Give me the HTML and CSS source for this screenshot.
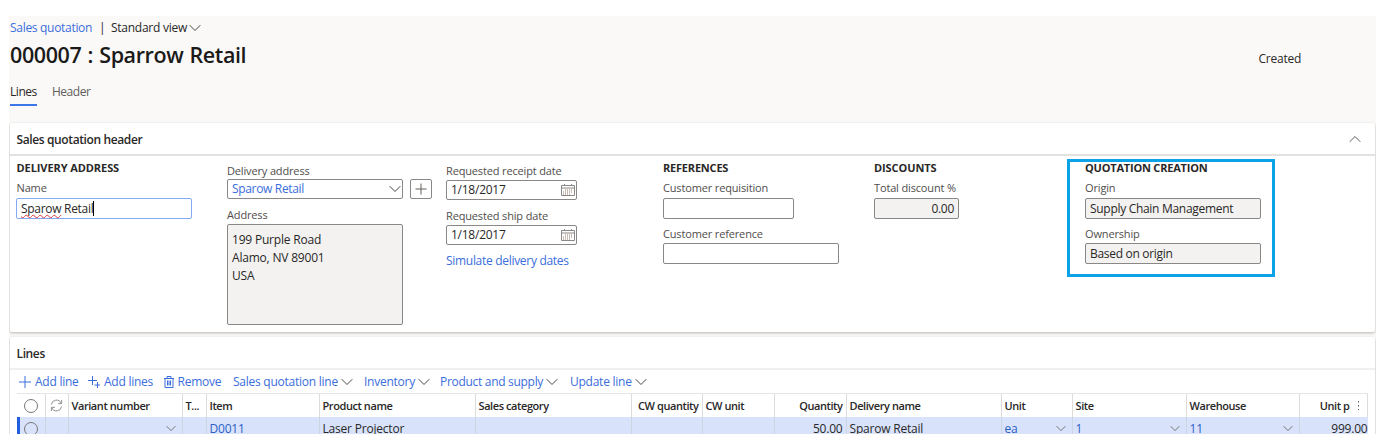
FILE: index.html
```html
<!DOCTYPE html>
<html lang="en">
<head>
<meta charset="utf-8">
<title>Sales quotation</title>
<link rel="stylesheet" href="styles.css">
</head>
<body>
<svg class="defs" width="0" height="0">
  <symbol id="chev" viewBox="0 0 12 8"><path d="M.7 1.200 6 6.500 11.300 1.200" fill="none" stroke="currentColor"/></symbol>
  <symbol id="cal" viewBox="0 0 14 14"><path d="M.5 2.500h13v10H.5zM.5 5h13M3.500 1v2M10.500 1v2" fill="none" stroke="#8a8886"/><path d="M4 7h8M2 9h10M2 11h7" fill="none" stroke="#98796c" stroke-dasharray="1 1"/></symbol>
</svg>
<main class="page">
  <header class="head">
    <div class="crumb"><a class="link">Sales quotation</a><span class="bar">|</span><span class="view">Standard view</span><svg class="chev"><use href="#chev"/></svg></div>
    <div class="title-row"><h1>000007 : Sparrow Retail</h1><span class="status">Created</span></div>
    <nav class="tabs"><span class="tab active">Lines</span><span class="tab">Header</span></nav>
  </header>

  <section class="card details">
    <div class="card-head"><h2>Sales quotation header</h2><svg class="chev up"><use href="#chev"/></svg></div>
    <div class="groups">
      <div class="group">
        <h3 class="wide">DELIVERY ADDRESS</h3>
        <label>Name</label>
        <div class="input focus"><span class="typo">Sparow</span>&nbsp;Retail<i class="caret"></i></div>
      </div>
      <div class="group raised">
        <label>Delivery address</label>
        <div class="combo"><div class="input link">Sparow Retail<svg class="chev"><use href="#chev"/></svg></div><span class="add"><svg viewBox="0 0 12 12"><path d="M6 .5v11M.5 6h11"/></svg></span></div>
        <label class="addr-label">Address</label>
        <div class="area">199 Purple Road<br>Alamo, NV 89001<br>USA</div>
      </div>
      <div class="group raised dates">
        <label>Requested receipt date</label>
        <div class="input date">1/18/2017<svg class="cal"><use href="#cal"/></svg></div>
        <label>Requested ship date</label>
        <div class="input date">1/18/2017<svg class="cal"><use href="#cal"/></svg></div>
        <a class="link simulate">Simulate delivery dates</a>
      </div>
      <div class="group">
        <h3>REFERENCES</h3>
        <label>Customer requisition</label>
        <div class="input medium"></div>
        <label class="next">Customer reference</label>
        <div class="input"></div>
      </div>
      <div class="group">
        <h3 class="wide">DISCOUNTS</h3>
        <label>Total discount %</label>
        <div class="input small ro">0.00</div>
      </div>
      <div class="group marked">
        <h3>QUOTATION CREATION</h3>
        <label>Origin</label>
        <div class="input ro">Supply Chain Management</div>
        <label class="next">Ownership</label>
        <div class="input ro">Based on origin</div>
      </div>
    </div>
  </section>

  <section class="card lines">
    <div class="card-head"><h2>Lines</h2></div>
    <div class="toolbar">
      <span class="tool w1"><svg viewBox="0 0 12 12"><path d="M6 0v12M0 6h12"/></svg>Add line</span>
      <span class="tool w2"><svg viewBox="0 0 12 12"><path d="M4.500 0v9M0 4.500h9M9.500 6v6M6.500 9h5.500"/></svg>Add lines</span>
      <span class="tool w3"><svg viewBox="0 0 12 12"><path d="M1 2.500h10M4 2.500V.5h4v2M2 2.500v9h8v-9M4.500 4.500v5M6 4.500v5M7.500 4.500v5"/></svg>Remove</span>
      <span class="tool w4">Sales quotation line<svg class="chev"><use href="#chev"/></svg></span>
      <span class="tool w5">Inventory<svg class="chev"><use href="#chev"/></svg></span>
      <span class="tool w6">Product and supply<svg class="chev"><use href="#chev"/></svg></span>
      <span class="tool w7">Update line<svg class="chev"><use href="#chev"/></svg></span>
    </div>
    <div class="grid">
      <div class="row hd">
        <span class="mark"><i class="radio"></i></span>
        <span class="mark"><svg class="refresh" viewBox="0 0 14 14"><path d="M1.500 6A5.500 5.500 0 0 1 12 4.500M12.500 1v4H8.700M12.500 8A5.500 5.500 0 0 1 2 9.500M1.500 13V9h3.800"/></svg></span>
        <span>Variant number</span><span>T...</span><span>Item</span><span>Product name</span><span>Sales category</span><span class="num">CW quantity</span><span>CW unit</span><span class="num">Quantity</span><span>Delivery name</span><span>Unit</span><span>Site</span><span>Warehouse</span><span class="price">Unit p<svg class="dots" viewBox="0 0 3 11"><path d="M1.500 1v9"/></svg></span>
      </div>
      <div class="row sel">
        <span class="mark"><i class="radio"></i></span><span></span>
        <span><svg class="chev"><use href="#chev"/></svg></span><span></span><span class="ref">D0011</span><span>Laser Projector</span><span></span><span></span><span></span><span class="num">50.00</span><span>Sparow Retail</span>
        <span class="ref">ea<svg class="chev"><use href="#chev"/></svg></span><span class="ref">1<svg class="chev"><use href="#chev"/></svg></span><span class="ref">11<svg class="chev"><use href="#chev"/></svg></span><span class="num last">999.00</span>
      </div>
    </div>
  </section>
</main>
</body>
</html>
```
FILE: styles.css
```css
*, *::before { box-sizing: border-box; }
body { margin: 0; padding: 16px 0 0 9px; background: #fff; color: #292827; font: 12px/18px "Open Sans", "Noto Sans", sans-serif; letter-spacing: -0.3px; white-space: nowrap; }
h1, h2, h3 { margin: 0; }
.defs { display: block; }
.page { width: 1367px; height: 417.500px; overflow: hidden; background: #faf9f8; }
.link { color: #3a6edc; }
.chev { width: 12px; height: 8px; flex: none; color: #484644; }

.head { height: 107px; padding: 3px 0 0 1px; }
.crumb { display: flex; align-items: center; height: 18px; }
.bar { margin: 0 5.500px 0 7px; }
.view { letter-spacing: -0.25px; }
.crumb .chev { margin-left: 2px; }
.title-row { display: flex; height: 28px; margin-top: 4px; align-items: center; justify-content: space-between; }
h1 { font-size: 21.500px; line-height: 28px; font-weight: 600; letter-spacing: -0.4px; word-spacing: 1px; color: #1b1a19; }
.status { margin: 7px 75px 0 0; letter-spacing: -0.25px; }
.tabs { display: flex; gap: 15px; margin-top: 14px; }
.tab { height: 23px; color: #605e5c; letter-spacing: -0.45px; }
.tab.active { color: #292827; border-bottom: 2px solid #3c76e8; }

.card { width: 1365px; margin-left: 0.5px; background: #fff; border-radius: 2px; box-shadow: 0 1px 3px rgba(0,0,0,.28); }
.details { height: 209px; }
.card-head { display: flex; align-items: center; justify-content: space-between; height: 33px; padding: 2px 14px 0 7px; border-bottom: 2px solid #e3e2e1; }
h2 { font-size: 12px; font-weight: 600; letter-spacing: -0.38px; }
.up { margin-top: -1px; transform: rotate(180deg); color: #605e5c; }
.groups { display: grid; grid-template-columns: 210.5px 219px 217px 211px 211px 189px; padding: 3px 0 0 7px; }
.group { padding-top: 1px; }
.raised { padding-top: 3px; }
h3 { height: 20px; font-size: 11px; line-height: 15px; font-weight: 700; letter-spacing: -0.2px; }
.wide { letter-spacing: -0.08px; }
label { display: block; height: 18px; font-size: 11px; line-height: 16px; font-weight: 500; color: #504e4c; letter-spacing: -0.15px; }
.input { display: flex; align-items: center; width: 176px; height: 21px; padding: 0 4px; border: 1px solid #8a8886; border-radius: 2px; background: #fff; letter-spacing: -0.3px; }
.focus { margin-left: -0.5px; border-color: #84a9f5; }
.ro { background: #f3f2f1; }
.medium { width: 131px; }
.small { width: 85px; justify-content: flex-end; }
.next { margin-top: 6px; line-height: 17px; }
.typo { text-decoration: underline wavy #e03a3a 1px; text-underline-offset: 1px; text-decoration-skip-ink: none; }
.caret { width: 1px; height: 15px; background: #000; }
.combo { display: flex; gap: 7px; }
.combo .input, .combo .add { height: 20px; }
.raised label { height: 17px; line-height: 17px; }
.combo .input { justify-content: space-between; padding-right: 1px; letter-spacing: -0.33px; }
.combo .input .chev { color: #484644; }
.add { display: flex; width: 22px; align-items: center; justify-content: center; border: 1px solid #8a8886; border-radius: 2px; }
.add svg { width: 12px; height: 12px; stroke: #605e5c; }
.raised .addr-label { margin-top: 7px; height: 18px; }
.area { width: 176px; height: 101px; padding: 6px 4px; border: 1px solid #8a8886; border-radius: 2px; background: #f3f2f1; letter-spacing: -0.2px; }
.raised .date { width: 131px; height: 20px; justify-content: space-between; padding-right: 1px; letter-spacing: -0.25px; }
.cal { width: 14px; height: 14px; }
.dates .date { margin-bottom: 7px; }
.dates label { height: 18px; }
.simulate { display: block; letter-spacing: -0.3px; }
.marked { position: relative; }
.marked::before { content: ""; position: absolute; left: -18px; top: 0; width: 208px; height: 118px; border: 3px solid #0ba3e8; }

.lines { height: 120px; margin-top: 5px; }
.lines .card-head { border-bottom-color: #f1f0ef; }
.toolbar { display: flex; height: 23px; padding-left: 9.500px; align-items: center; color: #3a6edc; letter-spacing: -0.25px; }
.tool { display: flex; align-items: center; gap: 4px; flex: none; }
.tool svg:not(.chev) { width: 12px; height: 12px; fill: none; stroke: currentColor; }
.w1 { width: 69px; }
.w2 { width: 75px; }
.w3 { width: 70px; gap: 3px; }
.w3 svg:not(.chev) { margin-left: -0.5px; }
.w4 { width: 131px; }
.w5 { width: 76px; }
.w6 { width: 130px; }
.w7 { width: 90px; }
.w4, .w5, .w6, .w7 { gap: 3px; }
.w6 { letter-spacing: -0.3px; }
.grid { width: 1351px; margin-left: 7px; border-top: 1px solid #e6e5e4; }
.row { display: grid; grid-template-columns: 29px 23px 114px 24px 113px 156px 156px 71px 72px 72px 155px 71px 114px 113px 68px; height: 23px; }
.row > span { display: flex; align-items: center; padding: 0 3px; border-right: 1px solid #dddcdb; }
.hd { font-size: 11px; font-weight: 600; letter-spacing: -0.42px; }
.row > .mark { padding: 0; justify-content: center; }
.row > .num { justify-content: flex-end; padding: 0 3px 0 0; }
.radio { width: 14px; height: 14px; border: 1px solid #797775; border-radius: 50%; }
.refresh { width: 13px; height: 13px; fill: none; stroke: #8a8886; }
.row > .price { justify-content: flex-end; gap: 7px; padding-right: 7px; }
.dots { width: 3px; height: 11px; stroke: #605e5c; stroke-dasharray: 1.500 2.500; }
.sel { height: 23px; background: #d8e3fb; box-shadow: inset 3px 0 #1f5fe0; letter-spacing: -0.2px; }
.sel > span { border-color: #cdd4e2; }
.sel .chev { width: 10px; height: 7px; margin: 0 3px 0 auto; color: #605e5c; }
.ref { color: #2b5fc4; }
.row > .last { padding-right: 0; border-right: 0; }
```
